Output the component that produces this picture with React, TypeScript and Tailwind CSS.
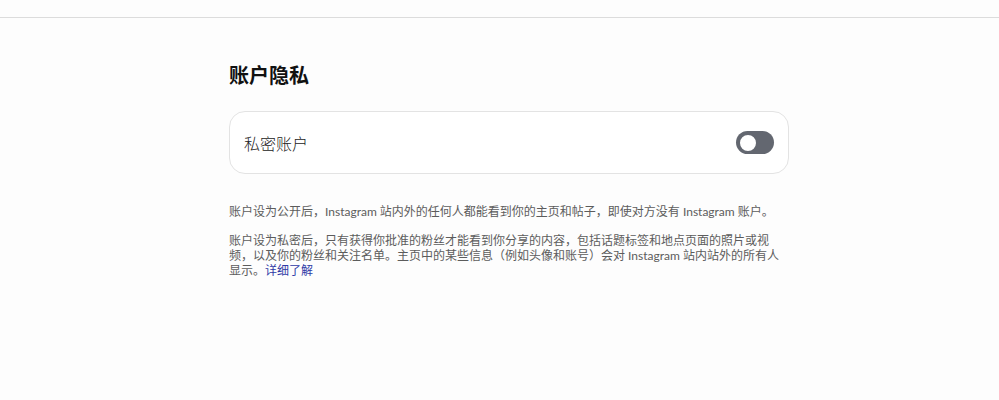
export default function App() {
  return (
    <div
      className="min-h-[400px] w-full bg-[#fdfdfd] text-[#111]"
      style={{ fontFamily: '"Noto Sans CJK SC", "Noto Sans", sans-serif' }}
    >
      <div className="h-[18px] border-b border-[#dcdcdc]" />
      <div className="flex justify-center pl-[19px] pt-[43px]">
        <div className="w-[560px]">
          <h1 className="text-[20px] font-bold leading-[28px] text-[#111]">账户隐私</h1>
          <div className="mt-[22px] flex h-[63px] items-center justify-between rounded-[16px] border border-[#e3e3e3] bg-white pl-[14px] pr-[14px]">
            <span className="text-[16px] font-light leading-[20px] text-[#222]">私密账户</span>
            <div className="flex h-[23px] w-[38px] items-center rounded-full bg-[#636770] p-[1.5px]">
              <div className="h-[20px] w-[20px] rounded-full border-2 border-[#636770] bg-white" />
            </div>
          </div>
          <div
            className="mt-[30px] w-[550px] text-[12px] leading-[15px] text-[#5c5c5c]"
            style={{ fontFamily: 'Lato, "Noto Sans CJK SC", sans-serif' }}
          >
            <p>账户设为公开后，Instagram 站内外的任何人都能看到你的主页和帖子，即使对方没有 Instagram 账户。</p>
            <p className="mt-[14px]">
              账户设为私密后，只有获得你批准的粉丝才能看到你分享的内容，包括话题标签和地点页面的照片或视频，以及你的粉丝和关注名单。主页中的某些信息（例如头像和账号）会对 Instagram 站内站外的所有人显示。<span className="text-[#2f3aa6]">详细了解</span>
            </p>
          </div>
        </div>
      </div>
    </div>
  );
}
